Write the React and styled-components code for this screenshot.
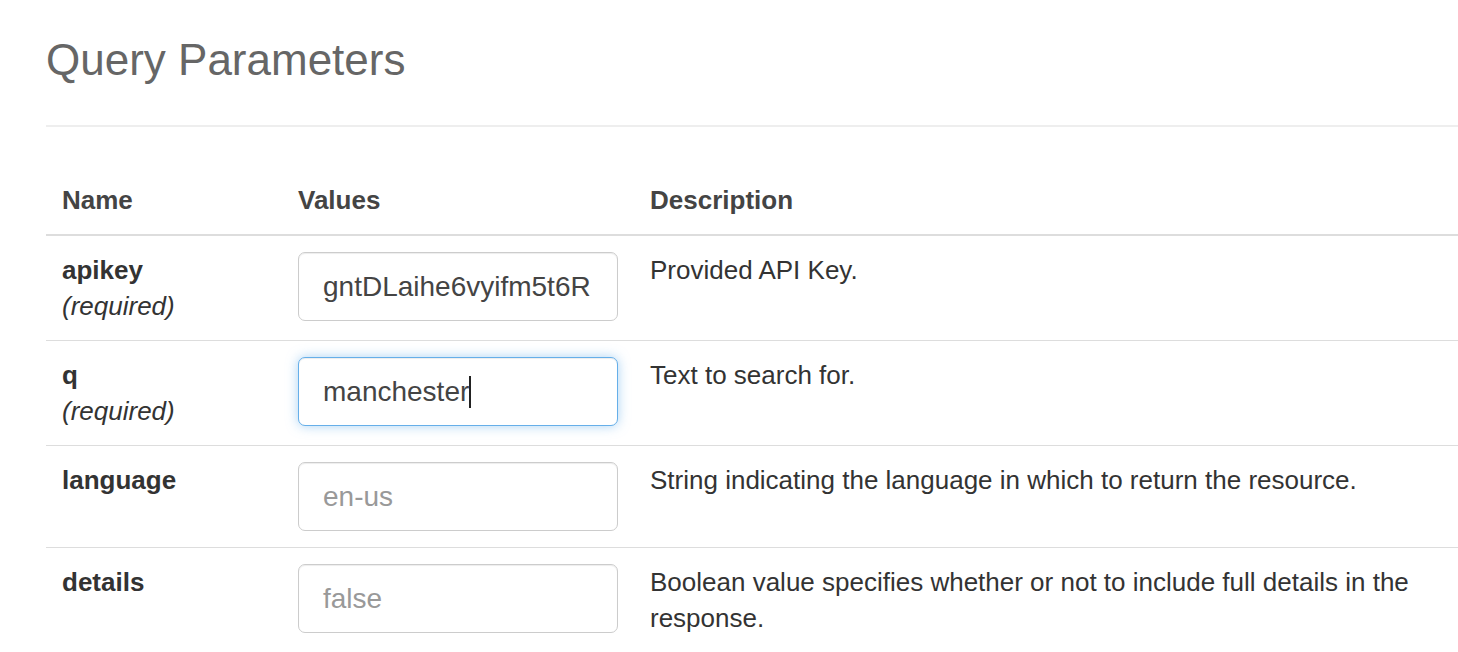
import React from 'react';
import styled, { createGlobalStyle } from 'styled-components';

const GlobalStyle = createGlobalStyle`
    body {
        margin: 0;
        background: #fff;
        font-family: "Liberation Sans", Arial, sans-serif;
        color: #333;
    }
`

const Page = styled.div`
    padding: 36px 0 0 46px;
`
const Title = styled.h3`
    margin: 0;
    font-size: 44px;
    line-height: 48px;
    font-weight: 400;
    color: #666;
`
const Rule = styled.hr`
    margin: 41px 0 39px 0;
    border: 0;
    border-top: 2px solid #eee;
`
const Table = styled.table`
    width: 100%;
    border-collapse: collapse;
    font-size: 26px;
    line-height: 36px;
`
const HeadCell = styled.th`
    text-align: left;
    font-weight: 700;
    color: #444;
    padding: 16px;
    border-bottom: 2px solid #ddd;
    width: ${props => props.$width || 'auto'};
`
const Row = styled.tr`
    & + & td {
        border-top: 1px solid #ddd;
    }
`
const Cell = styled.td`
    vertical-align: top;
    padding: 16px;
`
const ParamName = styled.div`
    font-weight: 700;
    color: #333;
`
const Required = styled.div`
    font-style: italic;
    color: #333;
`
const Field = styled.div`
    box-sizing: border-box;
    width: 320px;
    height: 69px;
    display: flex;
    align-items: center;
    padding: 0 24px;
    border-radius: 7px;
    background: #fff;
    font-size: 28px;
    border: 1px solid ${props => props.$focused ? '#66afe9' : '#ccc'};
    box-shadow: ${props => props.$focused
        ? 'inset 0 1px 1px rgba(0,0,0,.075), 0 0 12px rgba(102,175,233,.55)'
        : 'inset 0 1px 1px rgba(0,0,0,.075)'};
    color: ${props => props.$placeholder ? '#999' : '#444'};
    white-space: nowrap;
    overflow: hidden;
`
const Caret = styled.span`
    display: inline-block;
    width: 2px;
    height: 32px;
    background: #222;
`

const params = [
    { name: 'apikey', required: true, value: 'gntDLaihe6vyifm5t6R', desc: 'Provided API Key.' },
    { name: 'q', required: true, value: 'manchester', focused: true, desc: 'Text to search for.' },
    { name: 'language', placeholder: 'en-us', desc: 'String indicating the language in which to return the resource.' },
    { name: 'details', placeholder: 'false', desc: 'Boolean value specifies whether or not to include full details in the response.' },
];

function App(){
    return(
        <Page>
            <GlobalStyle/>
            <Title>Query Parameters</Title>
            <Rule/>
            <Table>
                <thead>
                    <tr>
                        <HeadCell $width="204px">Name</HeadCell>
                        <HeadCell $width="320px">Values</HeadCell>
                        <HeadCell>Description</HeadCell>
                    </tr>
                </thead>
                <tbody>
                    {params.map(p => (
                        <Row key={p.name}>
                            <Cell>
                                <ParamName>{p.name}</ParamName>
                                {p.required && <Required>(required)</Required>}
                            </Cell>
                            <Cell>
                                <Field $focused={p.focused} $placeholder={!p.value}>
                                    {p.value || p.placeholder}
                                    {p.focused && <Caret/>}
                                </Field>
                            </Cell>
                            <Cell>{p.desc}</Cell>
                        </Row>
                    ))}
                </tbody>
            </Table>
        </Page>
    )
}

export default App;
